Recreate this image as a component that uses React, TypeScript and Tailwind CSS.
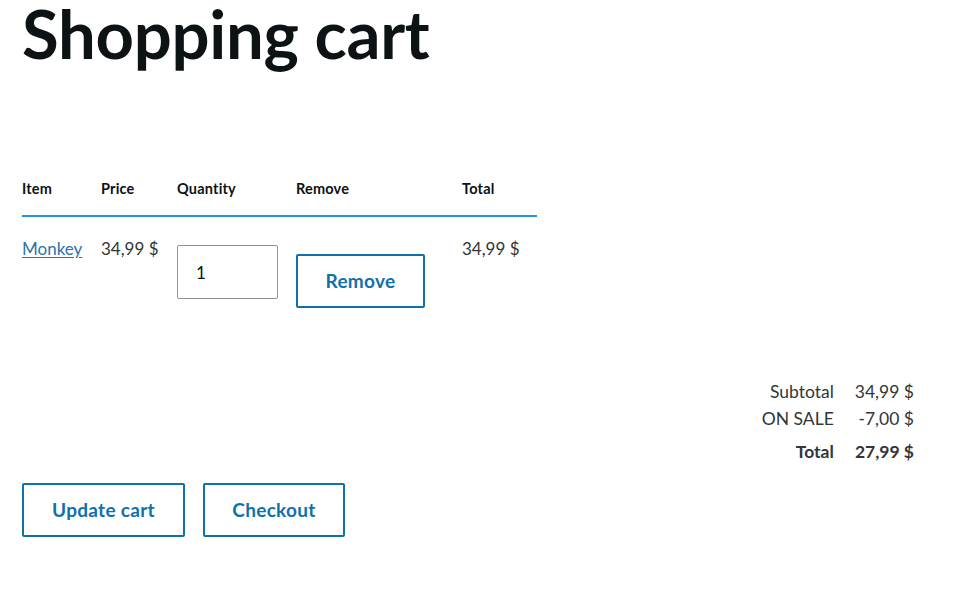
const rows = [{ name: 'Monkey', price: '34,99 $', qty: '1', total: '34,99 $' }];

const totals = [
  { label: 'Subtotal', value: '34,99 $' },
  { label: 'ON SALE', value: '-7,00 $' },
];

const font = { fontFamily: 'Lato, "Open Sans", sans-serif' };

export default function App() {
  return (
    <div className="min-h-[600px] bg-white text-[#313637] px-[22px]" style={font}>
      <h1 className="text-[67px] leading-[66px] font-bold text-[#0d1214] tracking-[-0.3px]">
        Shopping cart
      </h1>

      <div className="mt-[101px] w-[515px]">
        <div className="grid grid-cols-[79px_76px_119px_166px_75px] h-[50px] pb-[5px] items-center border-b-2 border-[#2494db] text-[14.5px] tracking-[0.2px] font-bold text-[#0d1214]">
          <div>Item</div>
          <div>Price</div>
          <div>Quantity</div>
          <div>Remove</div>
          <div>Total</div>
        </div>
        {rows.map((row) => (
          <div
            key={row.name}
            className="grid grid-cols-[79px_76px_119px_166px_75px] pt-[22px] text-[17px] leading-[20px]">
            <div>
              <a href="#" className="text-[#2b72ad] underline underline-offset-2">
                {row.name}
              </a>
            </div>
            <div>{row.price}</div>
            <div className="pt-[6px]">
              <input
                defaultValue={row.qty}
                className="w-[101px] h-[54px] border border-[#8e929c] rounded-[2px] px-[18px] text-[17px] text-[#0d1214] outline-none"
                style={font}
              />
            </div>
            <div className="pt-[15px]">
              <button
                className="w-[129px] h-[54px] border-2 border-[#0f70ae] rounded-[2px] text-[#0f70ae] font-bold text-[19px] tracking-[0.3px]"
                style={font}>
                Remove
              </button>
            </div>
            <div>{row.total}</div>
          </div>
        ))}
      </div>

      <div className="mt-[70px] flex justify-end pr-[34px]">
        <div className="grid grid-cols-[auto_auto] gap-x-[21px] text-[17.5px] leading-[27px]">
          {totals.map((t) => (
            <div key={t.label} className="contents">
              <div className="text-right">{t.label}</div>
              <div className="text-right">{t.value}</div>
            </div>
          ))}
          <div className="text-right font-bold pt-[6px]">Total</div>
          <div className="text-right font-bold pt-[6px]">27,99 $</div>
        </div>
      </div>

      <div className="mt-[18px] flex gap-[18px]">
        <button
          className="w-[163px] h-[54px] border-2 border-[#0f70ae] rounded-[2px] text-[#0f70ae] font-bold text-[19px] tracking-[0.3px]"
          style={font}>
          Update cart
        </button>
        <button
          className="w-[142px] h-[54px] border-2 border-[#0f70ae] rounded-[2px] text-[#0f70ae] font-bold text-[19px] tracking-[0.3px]"
          style={font}>
          Checkout
        </button>
      </div>
    </div>
  );
}
